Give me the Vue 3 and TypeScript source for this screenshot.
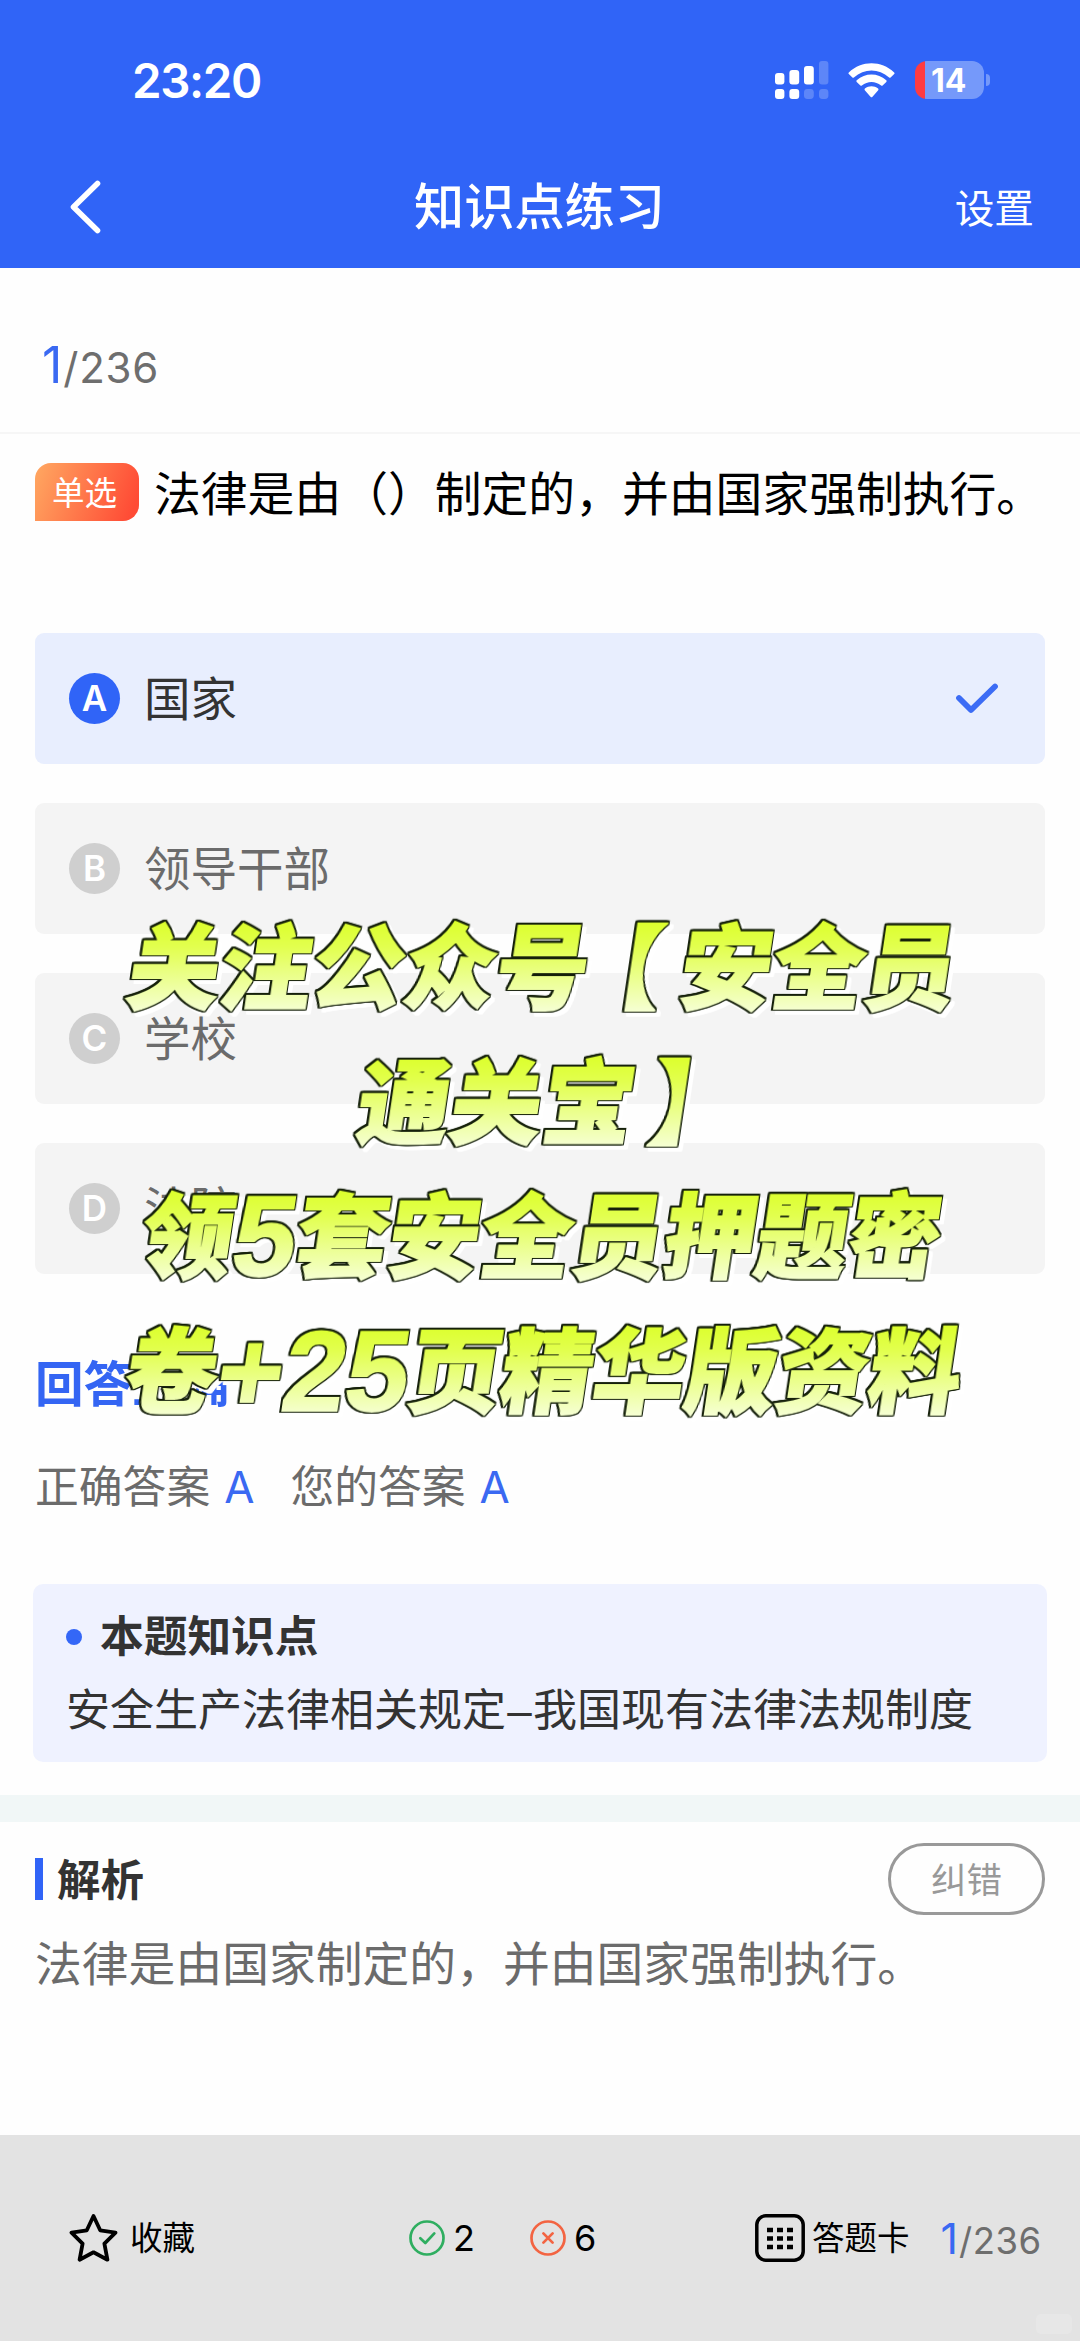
<script setup lang="ts">
interface Option {
  key: string
  label: string
  selected?: boolean
}

interface Segment {
  text: string
  kind?: 'latin' | 'open' | 'close'
}

const options: Option[] = [
  { key: 'A', label: '国家', selected: true },
  { key: 'B', label: '领导干部' },
  { key: 'C', label: '学校' },
  { key: 'D', label: '法院' },
]

const promo: Segment[][] = [
  [{ text: '关注公众号' }, { text: '【', kind: 'open' }, { text: '安全员' }],
  [{ text: '通关宝' }, { text: '】', kind: 'close' }],
  [{ text: '领' }, { text: '5', kind: 'latin' }, { text: '套安全员押题密' }],
  [{ text: '卷' }, { text: '+25', kind: 'latin' }, { text: '页精华版资料' }],
]
</script>

<template>
  <div class="page" lang="zh-CN">
    <header class="header">
      <div class="status">
        <span class="time">23:20</span>
        <div class="indicators">
          <svg class="signal" width="54" height="38" viewBox="0 0 54 38" fill="#fff">
            <rect x="0" y="12" width="9.4" height="11.5" rx="3" />
            <rect x="14.4" y="9" width="9.8" height="14.5" rx="3" />
            <rect x="29" y="5" width="9.8" height="18.5" rx="3" />
            <rect x="44" y="0" width="9.4" height="23.5" rx="3" opacity=".22" />
            <rect x="0" y="28" width="9.4" height="10" rx="3" />
            <rect x="14.4" y="28" width="9.8" height="10" rx="3" />
            <rect x="29" y="28" width="9.8" height="10" rx="3.4" opacity=".22" />
            <rect x="44" y="28" width="9.4" height="10" rx="3.4" opacity=".22" />
          </svg>
          <svg class="wifi" width="47" height="35" viewBox="0 0 47 35" fill="#fff">
            <path d="M.8 9.4C13.800-2.800 33.200-2.800 46.200 9.400Q46.900 10.200 46.200 11L42.600 14.400Q41.900 15 41.100 14.400C30.800 5.200 16.200 5.200 5.900 14.400Q5.100 15 4.400 14.400L.8 11Q.1 10.200.8 9.400Z" />
            <path d="M8.700 17.300C17.200 9.700 29.800 9.700 38.300 17.300Q39.100 18.100 38.300 18.900L34.600 22.500Q33.900 23.100 33.100 22.500C27.500 17.700 19.500 17.700 13.900 22.500Q13.100 23.100 12.400 22.500L8.700 18.900Q7.900 18.100 8.700 17.300Z" />
            <path d="M16.900 25.600C20.700 22.600 26.300 22.600 30.100 25.600Q30.900 26.400 30.200 27.200L24.500 33.800Q23.500 34.900 22.500 33.800L16.800 27.200Q16.100 26.400 16.900 25.600Z" />
          </svg>
          <div class="battery"><span>14</span></div>
          <i class="nub"></i>
        </div>
      </div>
      <div class="nav">
        <svg class="back" width="32" height="56" viewBox="0 0 32 56" fill="none" stroke="#fff" stroke-width="5.600" stroke-linecap="round" stroke-linejoin="round">
          <path d="M28.500 4.500L4.500 28L28.500 51.500" />
        </svg>
        <h1>知识点练习</h1>
        <span class="settings">设置</span>
      </div>
    </header>

    <div class="progress"><b>1</b><span>/236</span></div>

    <div class="question">
      <span class="badge">单选</span>
      <span class="stem">法律是由（）制定的，并由国家强制执行。</span>
    </div>

    <div class="options">
      <div v-for="o in options" :key="o.key" class="option" :class="{ selected: o.selected }">
        <span class="key">{{ o.key }}</span>
        <span class="label">{{ o.label }}</span>
        <svg v-if="o.selected" class="tick" width="46" height="34" viewBox="0 0 46 34" fill="none" stroke="#3c6cf5" stroke-width="5.800" stroke-linecap="round" stroke-linejoin="round">
          <path d="M4 16L16 28L40 4.500" />
        </svg>
      </div>
    </div>

    <div class="result">回答正确</div>
    <div class="answers">
      <span>正确答案</span><em>A</em><span class="yours">您的答案</span><em>A</em>
    </div>

    <section class="knowledge">
      <h2><i></i>本题知识点</h2>
      <p>安全生产法律相关规定<span class="dash">–</span>我国现有法律法规制度</p>
    </section>

    <div class="band"></div>

    <section class="analysis">
      <div class="head">
        <i></i>
        <h2>解析</h2>
        <button type="button">纠错</button>
      </div>
      <p>法律是由国家制定的，并由国家强制执行。</p>
    </section>

    <footer class="footer">
      <div class="group fav">
        <svg width="49" height="50" viewBox="0 0 49 50" fill="none" stroke="#000" stroke-width="3.800" stroke-linejoin="round">
          <path d="M24.500 3L31.200 17.300L46.500 19.600L35.400 30.600L38.400 46.700L24.500 39.300L10.600 46.700L13.600 30.600L2.500 19.600L17.800 17.300Z" />
        </svg>
        <span>收藏</span>
      </div>
      <div class="group right-count">
        <svg width="36" height="36" viewBox="0 0 36 36" fill="none" stroke="#2fae60" stroke-width="2.700" stroke-linecap="round" stroke-linejoin="round">
          <circle cx="18" cy="18" r="16.500" />
          <path d="M11.300 18.200L16.300 23L25.300 13.400" />
        </svg>
        <span class="num">2</span>
      </div>
      <div class="group wrong-count">
        <svg width="36" height="36" viewBox="0 0 36 36" fill="none" stroke="#f36442" stroke-width="2.700" stroke-linecap="round">
          <circle cx="18" cy="18" r="16.500" />
          <path d="M13.400 13.400L22.600 22.600M22.600 13.400L13.400 22.600" />
        </svg>
        <span class="num">6</span>
      </div>
      <div class="group sheet">
        <svg width="50" height="48" viewBox="0 0 50 48">
          <rect x="1.800" y="1.800" width="46.400" height="44.400" rx="9" fill="none" stroke="#000" stroke-width="3.500" />
          <path d="M12 16h6M22 16h6M32 16h6M12 24.500h6M22 24.500h6M32 24.500h6M12 33h6M22 33h6M32 33h6" stroke="#000" stroke-width="4.400" />
        </svg>
        <span>答题卡</span>
      </div>
      <div class="mini"><b>1</b><span>/236</span></div>
      <i class="mark"></i>
    </footer>

    <div class="promo">
      <div v-for="(line, i) in promo" :key="i" class="line" :class="'line-' + (i + 1)">
        <span class="ink"><span v-for="(s, j) in line" :key="j" :class="s.kind">{{ s.text }}</span></span>
      </div>
    </div>
  </div>
</template>

<style>
body {
  margin: 0;
  background: #fefefe;
}
</style>

<style scoped>
* {
  box-sizing: border-box;
}
h1,
h2,
p {
  margin: 0;
}
i,
em {
  font-style: normal;
}
.page {
  position: relative;
  display: flex;
  flex-direction: column;
  width: 1080px;
  height: 2341px;
  overflow: hidden;
  background: #fefefe;
  font-family: Inter, 'Noto Sans CJK SC', sans-serif;
  color: #333;
  white-space: nowrap;
}
.header {
  height: 268px;
  flex: none;
  background: #3064f7;
  color: #fff;
}
.status {
  display: flex;
  align-items: center;
  justify-content: space-between;
  height: 160px;
  padding: 0 90px 0 132px;
}
.time {
  font-size: 47.500px;
  font-weight: 600;
  line-height: 56px;
  letter-spacing: -1.400px;
  padding-top: 2px;
}
.indicators {
  display: flex;
  align-items: center;
}
.wifi {
  margin-left: 19px;
}
.battery {
  display: flex;
  align-items: center;
  width: 69px;
  height: 38px;
  margin-left: 20px;
  padding-left: 16px;
  border-radius: 12px;
  background: linear-gradient(90deg, #ff3b41 10.500px, #7599fa 10.500px);
  font-size: 32px;
  font-weight: 700;
  letter-spacing: 0;
}
.nub {
  width: 4px;
  height: 12px;
  margin-left: 2px;
  border-radius: 0 5px 5px 0;
  background: #7599fa;
}
.nav {
  display: grid;
  grid-template-columns: 1fr auto 1fr;
  align-items: center;
  height: 94px;
  padding: 0 46px 0 69px;
}
.nav h1 {
  margin-left: -24px;
  font-size: 50.200px;
  font-weight: 500;
  line-height: 60px;
}
.settings {
  justify-self: end;
  padding-top: 3px;
  font-size: 39.700px;
  line-height: 60px;
}
.progress {
  display: flex;
  align-items: baseline;
  height: 166px;
  flex: none;
  padding: 65px 0 0 42px;
  border-bottom: 2px solid #f6f6f6;
  line-height: 64px;
}
.progress b,
.mini b {
  color: #3a69f2;
  font-weight: 400;
}
.progress b {
  font-size: 50px;
}
.progress span {
  margin-left: 1px;
  font-size: 42px;
  letter-spacing: 0.700px;
  color: #6e6e6e;
}
.question {
  display: flex;
  align-items: center;
  height: 60px;
  flex: none;
  margin: 28px 35px 0;
}
.badge {
  width: 104px;
  height: 58px;
  border-radius: 16px 16px 16px 0;
  background: linear-gradient(110deg, #ffa35f 5%, #ff4b35 92%);
  color: #fff;
  font-size: 32.500px;
  line-height: 61px;
  text-align: center;
  padding-right: 5px;
}
.stem {
  margin-left: 15px;
  padding-top: 3px;
  font-size: 46.800px;
  line-height: 60px;
  color: #000;
}
.options {
  display: flex;
  flex-direction: column;
  gap: 39px;
  margin: 111px 35px 0;
}
.option {
  display: flex;
  align-items: center;
  height: 131px;
  padding: 0 44px 0 34px;
  border-radius: 9px;
  background: #f4f4f4;
  color: #6b6b6b;
}
.key {
  width: 51px;
  height: 51px;
  border-radius: 50%;
  background: #cfcfcf;
  color: #fff;
  font-size: 35px;
  font-weight: 600;
  line-height: 51px;
  text-align: center;
}
.label {
  margin-left: 24px;
  font-size: 46.500px;
  line-height: 60px;
}
.option.selected {
  background: #e8eefe;
  color: #333;
}
.selected .key {
  background: #3064f7;
}
.tick {
  margin-left: auto;
}
.result {
  margin: 76px 0 0 35px;
  font-size: 48.600px;
  font-weight: 700;
  line-height: 70px;
  color: #3465f3;
}
.answers {
  display: flex;
  margin: 36px 0 0 35px;
  font-size: 43.800px;
  line-height: 64px;
  color: #6b6b6b;
}
.answers em {
  margin-left: 14px;
  color: #3a69f2;
}
.yours {
  margin-left: 36px;
}
.knowledge {
  height: 178px;
  flex: none;
  margin: 64px 33px 0;
  padding: 22px 33px 0;
  border-radius: 10px;
  background: #eff2ff;
}
.knowledge h2 {
  display: flex;
  align-items: center;
  font-size: 43.700px;
  font-weight: 700;
  line-height: 62px;
}
.knowledge h2 i {
  width: 16px;
  height: 16px;
  margin-right: 18px;
  border-radius: 50%;
  background: #3467f7;
}
.knowledge p {
  margin-top: 11px;
  font-size: 44px;
  line-height: 62px;
}
.dash {
  display: inline-block;
  width: 27px;
  text-align: center;
  font-family: 'Liberation Sans', sans-serif;
}
.band {
  height: 27px;
  flex: none;
  margin-top: 33px;
  background: #f1f7f7;
}
.analysis {
  padding: 21px 35px 0;
}
.head {
  display: flex;
  align-items: center;
  height: 72px;
}
.head i {
  width: 8px;
  height: 42px;
  background: #3064f7;
}
.head h2 {
  margin-left: 14px;
  padding-top: 2px;
  font-size: 43.500px;
  font-weight: 700;
  line-height: 60px;
}
.head button {
  width: 157px;
  height: 72px;
  margin-left: auto;
  padding: 0 0 4px;
  border: 3px solid #999;
  border-radius: 36px;
  background: transparent;
  color: #999;
  font-family: inherit;
  font-size: 35.500px;
}
.analysis p {
  margin-top: 19px;
  font-size: 46.800px;
  line-height: 60px;
  color: #6b6b6b;
}
.footer {
  position: relative;
  display: flex;
  align-items: center;
  height: 206px;
  margin-top: auto;
  padding: 0 0 0 69px;
  background: #e3e3e3;
  color: #000;
}
.group {
  display: flex;
  align-items: center;
  font-size: 32.500px;
  line-height: 48px;
}
.group > span {
  padding-top: 2px;
}
.fav {
  width: 340px;
}
.fav span {
  margin-left: 12px;
}
.group > .num {
  margin-left: 8px;
  padding-top: 0;
  font-size: 36px;
}
.right-count {
  width: 121px;
}
.wrong-count {
  width: 225px;
}
.sheet span {
  margin-left: 7px;
}
.mini {
  display: flex;
  align-items: baseline;
  margin-left: 31px;
  padding-top: 2px;
  line-height: 48px;
}
.mini b {
  font-size: 43px;
}
.mini span {
  margin-left: 1px;
  font-size: 36.500px;
  letter-spacing: 0.500px;
  color: #6e6e6e;
}
.mark {
  position: absolute;
  right: 8px;
  bottom: 7px;
  width: 36px;
  height: 20px;
  border-radius: 5px;
  background: #e7e7e7;
}
.promo {
  position: absolute;
  top: 895px;
  left: 0;
  width: 1080px;
  filter: drop-shadow(4px 4px 0 #fff);
}
.line {
  display: flex;
  height: 134.700px;
}
.ink {
  height: 134.700px;
  font-family: 'Noto Sans CJK SC', sans-serif;
  font-size: 92px;
  font-weight: 900;
  line-height: 134.700px;
  transform: skewX(-8.500deg);
  color: transparent;
  background: linear-gradient(180deg, #dcff2b 26px, #e2ff4f 52px, #f5ffd0 115px);
  -webkit-background-clip: text;
  background-clip: text;
  -webkit-text-stroke: 1.800px transparent;
  filter: drop-shadow(1.500px 0 0 #15200a) drop-shadow(-1.500px 0 0 #15200a) drop-shadow(0 1.500px 0 #15200a)
    drop-shadow(0 -1.500px 0 #15200a);
}
.latin {
  font-family: 'Liberation Sans', sans-serif;
  font-size: 113px;
  font-weight: 700;
  line-height: 0;
  vertical-align: -5px;
}
.open {
  margin: 0 18px 0 -18px;
}
.close {
  padding-left: 16px;
}
.line-1 {
  padding-left: 130px;
}
.line-2 {
  padding-left: 360px;
}
.line-3 {
  padding-left: 143px;
}
.line-4 {
  padding-left: 127px;
}
</style>
